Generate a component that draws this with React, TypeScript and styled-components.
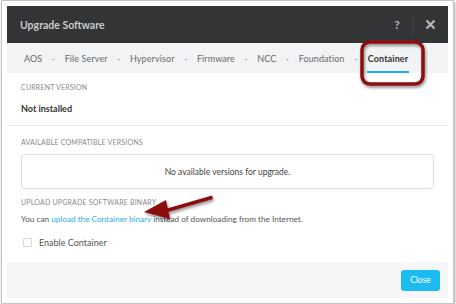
import styled, { createGlobalStyle } from "styled-components";

const Global = createGlobalStyle`
  html, body {
    margin: 0;
    background: #ffffff;
    font-family: "Lato", "Open Sans", sans-serif;
  }
`;

const Frame = styled.div`
  position: relative;
  width: 441px;
  margin: 0 0 0 1px;
  padding: 5px;
  border: 1px solid #c4c4c4;
  box-shadow: 1px 2px 3px rgba(0, 0, 0, 0.35);
`;

const Dialog = styled.div`
  display: flex;
  flex-direction: column;
  background: #fff;
`;

const Header = styled.div`
  display: flex;
  align-items: center;
  height: 37px;
  padding: 0 8px 0 13px;
  background: #333436;
`;

const Title = styled.span`
  flex: 1;
  font-size: 10.5px;
  font-weight: 700;
  color: #c9c9c9;
`;

const HeaderIcon = styled.span`
  display: flex;
  align-items: center;
  justify-content: center;
  width: 20px;
  height: 20px;
  color: #b8b8b8;
  font-size: 12px;
  font-weight: 700;
`;

const HeaderSep = styled.span`
  width: 1px;
  height: 20px;
  margin: 0 6px;
  background: #444;
`;

const TabBar = styled.div`
  display: flex;
  align-items: stretch;
  height: 30px;
  padding: 0 0 0 17px;
  background: #f2f3f5;
`;

const TabGroup = styled.span`
  display: flex;
`;

const Tab = styled.span<{ $active?: boolean }>`
  display: flex;
  align-items: center;
  font-size: 9px;
  letter-spacing: 0.1px;
  color: ${(p) => (p.$active ? "#333" : "#6a6a6a")};
  font-weight: ${(p) => (p.$active ? 700 : 400)};
  padding: 2px ${(p) => (p.$active ? "1px" : "0")} 0;
  border-bottom: 2px solid ${(p) => (p.$active ? "#22aaf0" : "transparent")};
  box-sizing: border-box;
`;

const Dot = styled.span`
  display: flex;
  align-items: center;
  padding: 0 10px;
  font-size: 9px;
  color: #888;
`;

const Section = styled.div<{ $divider?: boolean; $pad: string }>`
  padding: ${(p) => p.$pad};
  border-bottom: ${(p) => (p.$divider ? "1px solid #ebebeb" : "none")};
`;

const Label = styled.div<{ $gap: number }>`
  font-size: 7px;
  letter-spacing: 0.2px;
  color: #8a8a8a;
  margin-bottom: ${(p) => p.$gap}px;
`;

const Value = styled.div`
  font-size: 9px;
  font-weight: 700;
  color: #333;
`;

const EmptyBox = styled.div`
  display: flex;
  align-items: center;
  justify-content: center;
  height: 33px;
  border: 1px solid #dedede;
  border-radius: 3px;
  font-size: 8.5px;
  color: #444;
`;

const Text = styled.div`
  font-size: 8.2px;
  color: #555;
`;

const Link = styled.a`
  color: #27b2ea;
  text-decoration: none;
`;

const CheckRow = styled.label`
  display: flex;
  align-items: center;
  gap: 7px;
  margin-top: 13px;
  padding-left: 2px;
  font-size: 9px;
  color: #555;
`;

const Box = styled.span`
  width: 7px;
  height: 7px;
  border: 1px solid #d6d6d6;
  border-radius: 1px;
`;

const Footer = styled.div`
  display: flex;
  justify-content: flex-end;
  align-items: center;
  height: 36px;
  padding: 0 8px;
  background: #f6f6f6;
`;

const CloseButton = styled.button`
  width: 39px;
  height: 21px;
  border: none;
  border-radius: 3px;
  background: #1dbcf0;
  color: #fff;
  font-family: inherit;
  font-size: 8.5px;
  padding: 0;
`;

const Overlay = styled.svg`
  position: absolute;
  left: 0;
  top: 0;
  pointer-events: none;
`;

const tabs = ["AOS", "File Server", "Hypervisor", "Firmware", "NCC", "Foundation", "Container"];

export default function App() {
  return (
    <>
      <Global />
      <Frame>
        <Dialog>
          <Header>
            <Title>Upgrade Software</Title>
            <HeaderIcon>?</HeaderIcon>
            <HeaderSep />
            <HeaderIcon>
              <svg width="11" height="11" viewBox="0 0 11 11">
                <path d="M1.5 1.5 L9.5 9.5 M9.5 1.5 L1.5 9.5" stroke="#b8b8b8" strokeWidth="2.2" />
              </svg>
            </HeaderIcon>
          </Header>
          <TabBar>
            {tabs.map((t, i) => (
              <TabGroup key={t}>
                <Tab $active={t === "Container"}>{t}</Tab>
                {i < tabs.length - 1 && <Dot>·</Dot>}
              </TabGroup>
            ))}
          </TabBar>
          <Section $divider $pad="10px 14px 11px">
            <Label $gap={12}>CURRENT VERSION</Label>
            <Value>Not installed</Value>
          </Section>
          <Section $pad="12px 14px 0">
            <Label $gap={8}>AVAILABLE COMPATIBLE VERSIONS</Label>
            <EmptyBox>No available versions for upgrade.</EmptyBox>
          </Section>
          <Section $pad="9px 14px 14px">
            <Label $gap={8}>UPLOAD UPGRADE SOFTWARE BINARY</Label>
            <Text>
              You can <Link>upload the Container binary</Link> instead of downloading from the Internet.
            </Text>
            <CheckRow>
              <Box />
              Enable Container
            </CheckRow>
          </Section>
          <Footer>
            <CloseButton>Close</CloseButton>
          </Footer>
        </Dialog>
        <Overlay width="456" height="304" viewBox="0 0 456 304">
          <defs>
            <filter id="sh" x="-20%" y="-20%" width="140%" height="140%">
              <feDropShadow dx="1" dy="2" stdDeviation="1.5" floodColor="#000" floodOpacity="0.45" />
            </filter>
          </defs>
          <rect x="360" y="41" width="61" height="42" rx="8" fill="none" stroke="#8c0c0f" strokeWidth="3.5" filter="url(#sh)" />
          <g filter="url(#sh)" fill="#8c0c0f">
            <path d="M165 207.5 L210 194.5 L211 198 L166 211 Z" />
            <path d="M142 211 L164 199 L168 218 Z" />
          </g>
        </Overlay>
      </Frame>
    </>
  );
}
